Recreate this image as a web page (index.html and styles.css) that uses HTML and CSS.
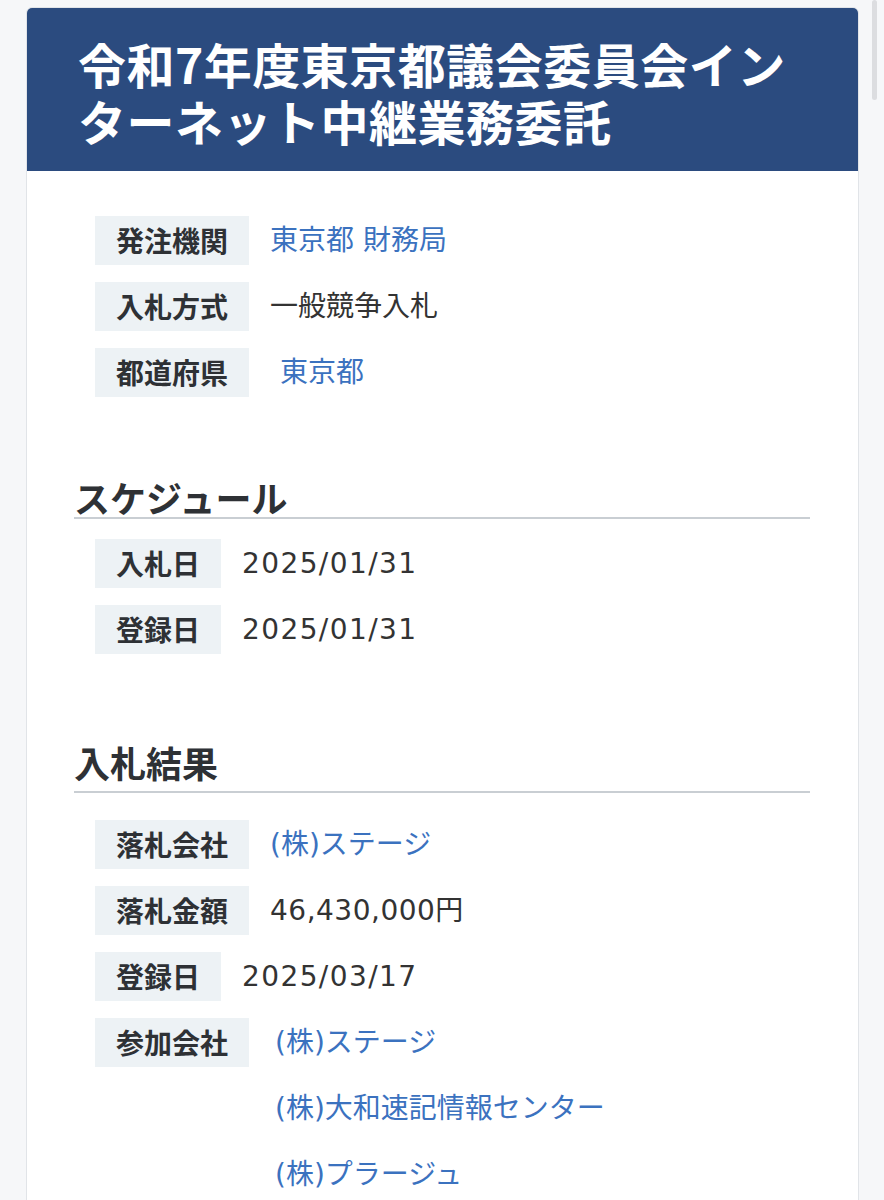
FILE: index.html
```html
<!DOCTYPE html>
<html lang="ja">
<head>
<meta charset="utf-8">
<title>令和7年度東京都議会委員会インターネット中継業務委託</title>
<link rel="stylesheet" href="styles.css">
</head>
<body>
<div class="scroll-thumb"></div>
<main class="card">
  <header class="card-header">
    <h1 class="title">令和7年度東京都議会委員会インターネット中継業務委託</h1>
  </header>
  <div class="card-body">
    <section class="section section--first">
      <div class="rows">
        <div class="row"><span class="label">発注機関</span><a class="value link" href="#">東京都 財務局</a></div>
        <div class="row"><span class="label">入札方式</span><span class="value">一般競争入札</span></div>
        <div class="row"><span class="label">都道府県</span><a class="value link value--spaced" href="#">東京都</a></div>
      </div>
    </section>

    <section class="section">
      <h2 class="section-title">スケジュール</h2>
      <div class="rows">
        <div class="row"><span class="label">入札日</span><span class="value date">2025/01/31</span></div>
        <div class="row"><span class="label">登録日</span><span class="value date">2025/01/31</span></div>
      </div>
    </section>

    <section class="section section--result">
      <h2 class="section-title">入札結果</h2>
      <div class="rows">
        <div class="row"><span class="label">落札会社</span><a class="value link" href="#">(株)ステージ</a></div>
        <div class="row"><span class="label">落札金額</span><span class="value amount">46,430,000円</span></div>
        <div class="row"><span class="label">登録日</span><span class="value date">2025/03/17</span></div>
        <div class="row row--top"><span class="label">参加会社</span>
          <ul class="company-list">
            <li><a class="link" href="#">(株)ステージ</a></li>
            <li><a class="link" href="#">(株)大和速記情報センター</a></li>
            <li><a class="link" href="#">(株)プラージュ</a></li>
          </ul>
        </div>
      </div>
    </section>
  </div>
</main>
</body>
</html>
```

FILE: styles.css
```css
html {
  overflow: hidden;
}

body {
  margin: 0;
  background: #f6f7f9;
  font-family: "Noto Sans CJK JP", "Noto Sans", sans-serif;
  color: #333;
}

.scroll-thumb {
  position: absolute;
  top: 0;
  left: 872px;
  width: 5px;
  height: 100px;
  border-radius: 3px;
  background: #dcdde0;
}

.card {
  margin: 7px 0 0 26px;
  width: 831px;
  background: #fff;
  border: 1px solid #e1e4e8;
  border-radius: 6px;
  min-height: 1300px;
}

.card-header {
  background: #2b4b7f;
  border-radius: 5px 5px 0 0;
  padding: 27px 40px 22px 51px;
}

.title {
  margin: 0;
  color: #fff;
  font-size: 48px;
  line-height: 57px;
  font-weight: 700;
  letter-spacing: 0.5px;
}

.card-body {
  padding: 45px 48px 0 47px;
}

.section {
  margin-top: 82px;
}

.section--first {
  margin-top: 0;
}

.section-title {
  margin: 0;
  font-size: 36px;
  line-height: 36px;
  font-weight: 700;
  color: #2e3135;
  padding-bottom: 2px;
  border-bottom: 2px solid #c9ced3;
}

.section--result {
  margin-top: 90px;
}

.section--result .section-title {
  padding-bottom: 11px;
}

.section .section-title + .rows {
  margin-top: 20px;
}

.section--result .section-title + .rows {
  margin-top: 27px;
}

.rows {
  display: flex;
  flex-direction: column;
  gap: 17px;
  padding-left: 21px;
}

.row {
  display: flex;
  align-items: center;
  gap: 21px;
}

.row--top {
  align-items: flex-start;
}

.label {
  background: #edf2f5;
  padding: 0 21px;
  height: 49px;
  line-height: 49px;
  font-size: 28px;
  font-weight: 700;
  color: #2e3135;
  white-space: nowrap;
}

.value {
  font-family: "DejaVu Sans", "Noto Sans CJK JP", sans-serif;
  font-size: 28px;
  line-height: 49px;
  height: 49px;
  color: #333;
}

.date {
  letter-spacing: 1.4px;
}

.amount {
  letter-spacing: 0.5px;
}

.link {
  color: #3b72bf;
  text-decoration: none;
}

.value--spaced {
  margin-left: 10px;
}

.company-list {
  list-style: none;
  margin: 0 0 0 5px;
  padding: 0;
  display: flex;
  flex-direction: column;
  gap: 17px;
}

.company-list li {
  font-family: "DejaVu Sans", "Noto Sans CJK JP", sans-serif;
  font-size: 28px;
  line-height: 49px;
  height: 49px;
}
```
